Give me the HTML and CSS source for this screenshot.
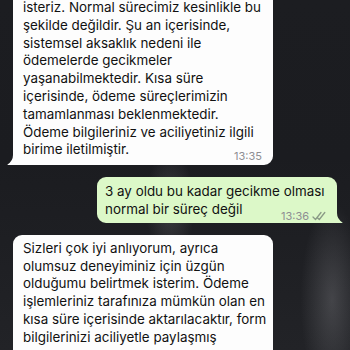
FILE: index.html
```html
<!DOCTYPE html>
<html lang="tr">
<head>
<meta charset="utf-8">
<link rel="stylesheet" href="styles.css">
</head>
<body>
<div class="chat">
  <div class="bubble in b1">
    <p class="text">isteriz. Normal sürecimiz kesinlikle bu<br>şekilde değildir. Şu an içerisinde,<br>sistemsel aksaklık nedeni ile<br>ödemelerde gecikmeler<br>yaşanabilmektedir. Kısa süre<br>içerisinde, ödeme süreçlerimizin<br>tamamlanması beklenmektedir.<br>Ödeme bilgileriniz ve aciliyetiniz ilgili<br>birime iletilmiştir.</p>
    <span class="meta">13:35</span>
    <svg class="tail tail-in" width="12" height="14" viewBox="0 0 12 14"><path d="M6 0 L12 0 L12 14 L2 14 Q0 14 0.5 13.4 Q6 10 6 4 Z" fill="#fdfdfd"/></svg>
  </div>
  <div class="bubble out b2">
    <p class="text">3 ay oldu bu kadar gecikme olması<br>normal bir süreç değil</p>
    <span class="meta">13:36 <svg class="ticks" width="15" height="10" viewBox="0 0 15 10"><path d="M1 6 L3.5 8.5 L9 1.5 M6 7.2 L7.3 8.5 L12.8 1.5" fill="none" stroke="#8a9a86" stroke-width="1.3" stroke-linecap="round" stroke-linejoin="round"/></svg></span>
    <svg class="tail tail-out" width="12" height="14" viewBox="0 0 12 14"><path d="M6 0 L0 0 L0 14 L10 14 Q12 14 11.5 13.4 Q6 10 6 4 Z" fill="#dcf8c8"/></svg>
  </div>
  <div class="bubble in b3">
    <p class="text">Sizleri çok iyi anlıyorum, ayrıca<br>olumsuz deneyiminiz için üzgün<br>olduğumu belirtmek isterim. Ödeme<br>işlemleriniz tarafınıza mümkün olan en<br>kısa süre içerisinde aktarılacaktır, form<br>bilgilerinizi aciliyetle paylaşmış<br>bulunmaktayız.</p>
  </div>
</div>
</body>
</html>
```
FILE: styles.css
```css
html, body {
  margin: 0;
  padding: 0;
}
body {
  width: 350px;
  height: 350px;
  overflow: hidden;
  background-color: #1b1c20;
  background-image:
    radial-gradient(ellipse 35px 80px at 170px 205px, rgba(130,130,135,0.30), rgba(0,0,0,0) 70%),
    radial-gradient(ellipse 45px 140px at 332px 300px, rgba(160,160,165,0.28), rgba(0,0,0,0) 70%),
    linear-gradient(180deg, #1c1d21 0%, #1b1c20 45%, #222327 100%);
  font-family: Inter, "Liberation Sans", sans-serif;
  color: #111;
}
.chat {
  display: flex;
  flex-direction: column;
  gap: 12px;
  padding: 0 13px;
  margin-top: -12px;
}
.bubble {
  position: relative;
  display: grid;
  border-radius: 9px;
  box-sizing: border-box;
}
.bubble .text,
.bubble .meta {
  grid-area: 1 / 1;
}
.text {
  margin: 0;
  font-size: 13.4px;
  line-height: 17.8px;
  white-space: nowrap;
}
.meta {
  justify-self: end;
  align-self: end;
  font-size: 11px;
  line-height: 13px;
  color: #8e8e93;
  display: flex;
  align-items: center;
  gap: 3px;
  margin-bottom: -4px;
}
.in {
  align-self: flex-start;
  background: #fdfdfd;
  width: 260px;
  padding: 11px 11px 6px 10px;
}
.out {
  align-self: flex-end;
  background: #dcf8c8;
  width: 240px;
  padding: 6px 10px 4px 8px;
}
.b1 {
  border-bottom-left-radius: 4px;
}
.b2 {
  border-bottom-right-radius: 4px;
}
.b3 {
  padding-top: 5px;
}
.meta .ticks {
  display: block;
}
.tail {
  position: absolute;
  bottom: 0;
}
.tail-in {
  left: -6px;
}
.tail-out {
  right: -6px;
}
```
